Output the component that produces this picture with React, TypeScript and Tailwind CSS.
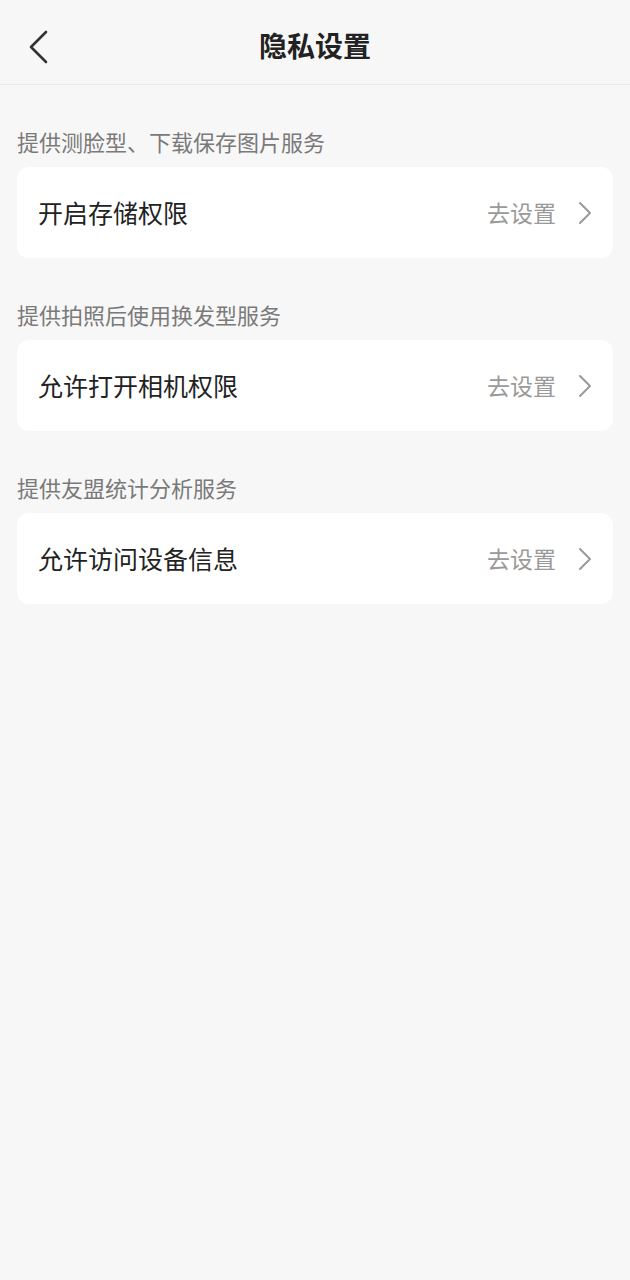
import React from "react";

const sections = [
  { label: "提供测脸型、下载保存图片服务", item: "开启存储权限" },
  { label: "提供拍照后使用换发型服务", item: "允许打开相机权限" },
  { label: "提供友盟统计分析服务", item: "允许访问设备信息" },
];

export default function App() {
  return (
    <div
      className="w-[630px] h-[1280px] bg-[#f7f7f7]"
      style={{ fontFamily: '"Noto Sans CJK SC", "Noto Sans", sans-serif' }}
    >
      <div className="relative h-[85px] flex items-center justify-center border-b border-[#ebebeb]">
        <svg
          className="absolute left-[26px] top-[30px]"
          width="24"
          height="34"
          viewBox="0 0 24 34"
          fill="none"
        >
          <path d="M20 2 L5 17 L20 32" stroke="#333" strokeWidth="2.6" strokeLinecap="round" strokeLinejoin="round" />
        </svg>
        <span className="mt-[6px] text-[28px] font-bold text-[#222] leading-none">隐私设置</span>
      </div>
      {sections.map((s) => (
        <div key={s.label} className="px-[17px]">
          <div className="pt-[41px] mb-[11px] h-[30px] box-content leading-[30px] text-[22px] text-[#7a7a7a]">
            {s.label}
          </div>
          <div className="h-[91px] bg-white rounded-[12px] flex items-center pl-[21px] pr-[21px]">
            <span className="flex-1 text-[25px] text-[#222]">{s.item}</span>
            <span className="text-[23px] text-[#9a9a9a]">去设置</span>
            <svg className="ml-[22px]" width="14" height="24" viewBox="0 0 14 24" fill="none">
              <path d="M2 2 L12 12 L2 22" stroke="#9a9a9a" strokeWidth="2" strokeLinecap="round" strokeLinejoin="round" />
            </svg>
          </div>
        </div>
      ))}
    </div>
  );
}
